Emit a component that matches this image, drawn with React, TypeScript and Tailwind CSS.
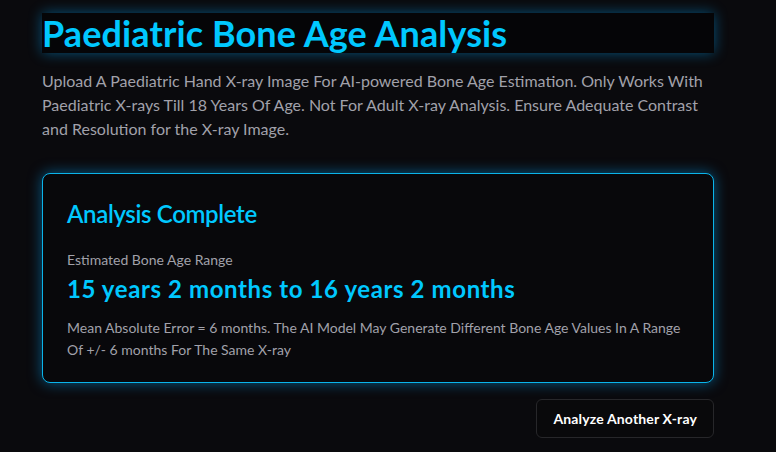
import { FC } from "react"

const App: FC = () => {
  return (
    <div className="min-h-screen w-full bg-[#0a0a0d] font-['Segoe_UI','Lato','Liberation_Sans',sans-serif]">
      <div className="ml-[42px] w-[672px] pt-[13px] pb-4">
        <h1 className="bg-[#050507] text-[36px] leading-[40px] font-bold text-[#00c8ff] tracking-[0.1px] shadow-[0_0_14px_rgba(0,170,255,0.45)]">
          Paediatric Bone Age Analysis
        </h1>
        <p className="mt-4 text-base leading-6 text-[#a1a1aa]">
          Upload A Paediatric Hand X-ray Image For AI-powered Bone Age Estimation. Only Works With Paediatric X-rays Till 18 Years Of Age. Not For Adult X-ray Analysis. Ensure Adequate Contrast and Resolution for the X-ray Image.
        </p>

        <div className="mt-8 rounded-lg border border-[#0bb4ea] bg-[#08080b] px-6 pt-6 pb-[21px] shadow-[0_0_14px_rgba(0,170,255,0.5)]">
          <h2 className="text-2xl leading-8 font-semibold text-[#00c8ff] tracking-[-0.35px]">Analysis Complete</h2>
          <div className="mt-5 text-sm leading-5 text-[#a1a1aa]">Estimated Bone Age Range</div>
          <div className="mt-[3px] text-2xl leading-8 font-bold text-[#00c8ff] tracking-[0.6px]">
            15 years 2 months to 16 years 2 months
          </div>
          <p className="mt-3 text-sm leading-[22px] text-[#a1a1aa]">
            Mean Absolute Error = 6 months. The AI Model May Generate Different Bone Age Values In A Range Of +/- 6 months For The Same X-ray
          </p>
        </div>

        <div className="mt-4 flex justify-end">
          <button className="h-[39px] rounded-md border border-[#27272a] bg-[#09090b] px-4 text-sm font-bold tracking-[0.15px] text-white">
            Analyze Another X-ray
          </button>
        </div>
      </div>
    </div>
  )
}

export default App
